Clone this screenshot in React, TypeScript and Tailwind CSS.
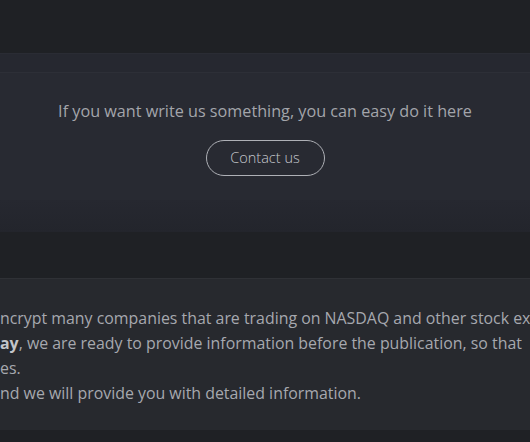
import React from 'react';

const font = { fontFamily: '"Open Sans", "Liberation Sans", sans-serif' };

const App: React.FC = () => {
  return (
    <div className="w-[530px] h-[442px] overflow-hidden bg-[#1f2125]" style={font}>
      {/* top strip */}
      <div className="h-[53px] bg-[#1f2125]" />
      <div className="h-[19px] bg-[#262830] border-t border-[#2a2c34]" />

      {/* contact banner */}
      <section className="h-[128px] bg-[#282a32] border-t border-[#2d2f37] flex flex-col items-center pt-[26px]">
        <p className="text-[16.2px] text-[#a3a5ab] leading-[24px]">
          If you want write us something, you can easy do it here
        </p>
        <button className="mt-[17px] h-[36px] w-[119px] rounded-full border border-[#aeb0b6] text-[14.5px] font-light text-[#c6c8ce]">
          Contact us
        </button>
      </section>

      <div className="h-[32px] bg-gradient-to-b from-[#262830] to-[#23252c]" />
      <div className="h-[46px] bg-[#1f2125]" />

      {/* about block */}
      <section className="h-[152px] bg-[#27292e] border-t border-[#2f3136] pt-[27px] text-[15.9px] leading-[25px] text-[#a6a8ae] whitespace-nowrap overflow-hidden">
        <div>ncrypt many companies that are trading on NASDAQ and other stock exchanges</div>
        <div>
          <b className="font-bold text-[#c3c5ca]">ay</b>, we are ready to provide information before the publication, so that
        </div>
        <div>es.</div>
        <div>nd we will provide you with detailed information.</div>
      </section>
    </div>
  );
};

export default App;
